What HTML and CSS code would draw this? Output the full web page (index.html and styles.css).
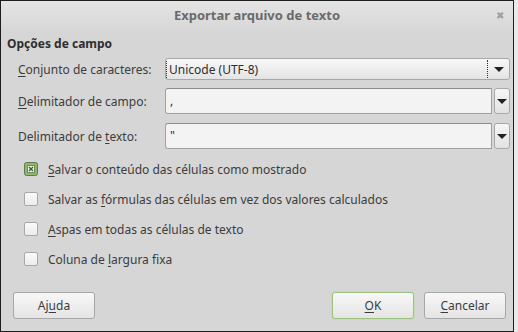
FILE: index.html
```html
<!DOCTYPE html>
<html lang="pt">
<head>
  <meta charset="UTF-8">
  <title>Exportar arquivo de texto</title>
  <link rel="stylesheet" href="styles.css">
</head>
<body>
  <div class="window">
    <div class="titlebar">
      <span class="title">Exportar arquivo de texto</span>
      <span class="close">&#x2716;</span>
    </div>

    <div class="content">
      <h4 class="section">Opções de campo</h4>

      <div class="field">
        <label><u>C</u>onjunto de caracteres:</label>
        <div class="combo">
          <span class="combo-text">Unicode (UTF-8)</span>
          <span class="combo-arrow"><span class="arrow"></span></span>
        </div>
      </div>

      <div class="field tall">
        <label><u>D</u>elimitador de campo:</label>
        <div class="entry">,</div>
        <div class="entry-btn"><span class="arrow"></span></div>
      </div>

      <div class="field tall">
        <label>Delimitador de <u>t</u>exto:</label>
        <div class="entry">"</div>
        <div class="entry-btn"><span class="arrow"></span></div>
      </div>

      <div class="checks">
        <div class="check">
          <svg class="box-svg" width="14" height="14" viewBox="0 0 14 14">
            <rect x="0.5" y="0.5" width="13" height="13" rx="2" fill="#8eb572" stroke="#5f7d4a"/>
            <rect x="3.5" y="3.5" width="7" height="7" fill="#eef3ea" stroke="#6f8f59"/>
            <path d="M5 5 L9 9 M9 5 L5 9" stroke="#3d5a2c" stroke-width="1.3"/>
          </svg>
          <span><u>S</u>alvar o conteúdo das células como mostrado</span>
        </div>
        <div class="check">
          <span class="box"></span>
          <span>Salvar as <u>f</u>órmulas das células em vez dos valores calculados</span>
        </div>
        <div class="check">
          <span class="box"></span>
          <span><u>A</u>spas em todas as células de texto</span>
        </div>
        <div class="check">
          <span class="box"></span>
          <span>Coluna de <u>l</u>argura fixa</span>
        </div>
      </div>
    </div>

    <div class="buttons">
      <button class="btn">Aj<u>u</u>da</button>
      <div class="spacer"></div>
      <button class="btn default"><u>O</u>K</button>
      <button class="btn"><u>C</u>ancelar</button>
    </div>
  </div>
</body>
</html>
```

FILE: styles.css
```css
body {
  margin: 0;
  width: 518px;
  height: 332px;
  background: #e9e9e9;
  font-family: "Noto Sans", "Open Sans", sans-serif;
  font-size: 12px;
  color: #3c3c3c;
}

.window {
  width: 512px;
  height: 330px;
  border: 1px solid #1e1e1e;
  background: #d6d6d6;
  display: flex;
  flex-direction: column;
}

u {
  text-underline-offset: 2px;
}

.titlebar {
  height: 28px;
  flex-shrink: 0;
  display: flex;
  align-items: center;
  justify-content: center;
  position: relative;
  background: linear-gradient(#e4e4e4, #d8d8d8);
}

.title {
  font-weight: bold;
  font-size: 13px;
  color: #6a6a6a;
}

.close {
  position: absolute;
  right: 9px;
  top: 7px;
  font-size: 10px;
  color: #a0a0a0;
}

.content {
  padding: 0 3px 0 6px;
  flex: 1;
}

.section {
  margin: 6px 0 6px 0;
  height: 17px;
  line-height: 17px;
  font-size: 12px;
  color: #2e2e2e;
}

.field {
  display: flex;
  align-items: center;
  height: 22px;
  margin-bottom: 8px;
}

.field.tall {
  height: 26px;
  margin-bottom: 9px;
}

.field label {
  width: 147px;
  padding-left: 11px;
  flex-shrink: 0;
}

.combo {
  flex: 1;
  height: 22px;
  box-sizing: border-box;
  display: flex;
  align-items: center;
  border: 1px solid #a8a8a8;
  border-radius: 3px;
  background: linear-gradient(#f8f8f8, #e4e4e4);
}

.combo-text {
  flex: 1;
  padding-left: 2px;
  border-left: 1px dotted #333;
  color: #2e2e2e;
}

.combo-arrow {
  width: 21px;
  height: 18px;
  border-left: 1px dotted #333;
  display: flex;
  align-items: center;
  justify-content: center;
}

.entry {
  flex: 1;
  height: 26px;
  line-height: 24px;
  box-sizing: border-box;
  padding-left: 4px;
  border: 1px solid #a0a0a0;
  border-top-color: #8c8c8c;
  border-radius: 3px 0 0 3px;
  background: #f3f3f3;
  color: #2e2e2e;
}

.entry-btn {
  width: 16px;
  height: 26px;
  box-sizing: border-box;
  margin-left: 2px;
  border: 1px solid #a8a8a8;
  border-radius: 3px;
  background: linear-gradient(#f6f6f6, #e2e2e2);
  display: flex;
  align-items: center;
  justify-content: center;
}

.arrow {
  width: 0;
  height: 0;
  border-left: 5px solid transparent;
  border-right: 5px solid transparent;
  border-top: 5px solid #222;
}

.checks {
  margin-top: 10px;
  padding-left: 17px;
  display: flex;
  flex-direction: column;
  gap: 10px;
}

.check {
  display: flex;
  align-items: center;
  gap: 10px;
  height: 20px;
}

.box {
  width: 12px;
  height: 12px;
  border: 1px solid #a8a8a8;
  border-radius: 2px;
  background: linear-gradient(#fafafa, #ececec);
}

.buttons {
  display: flex;
  align-items: center;
  gap: 10px;
  padding: 0 7px 12px 12px;
}

.spacer {
  flex: 1;
}

.btn {
  width: 82px;
  height: 27px;
  font-family: inherit;
  font-size: 12px;
  color: #3c3c3c;
  border: 1px solid #a6a6a6;
  border-radius: 3px;
  background: linear-gradient(#f8f8f8, #e4e4e4);
  padding: 0;
}

.btn.default {
  border-color: #9dc27f;
  box-shadow: 0 0 0 1px #c6dcb3;
}
```
